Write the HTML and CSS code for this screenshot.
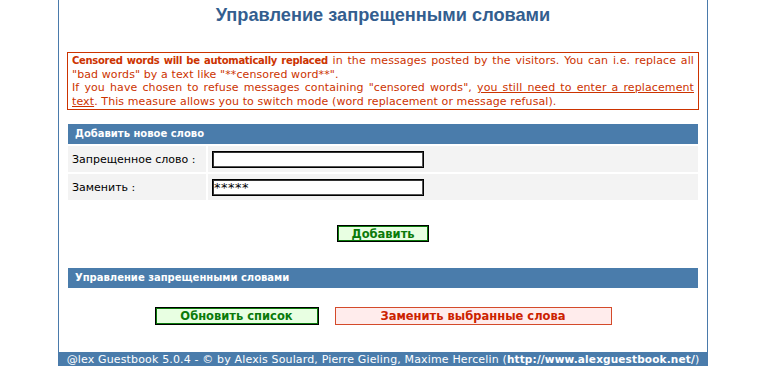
FILE: index.html
```html
<!DOCTYPE html>
<html lang="ru">
<head>
<meta charset="utf-8">
<title>Управление запрещенными словами</title>
<link rel="stylesheet" href="styles.css">
</head>
<body>
<div class="page">
  <h1 class="title">Управление запрещенными словами</h1>

  <div class="notice">
    <div class="line just"><b>Censored words will be automatically replaced</b> in the messages posted by the visitors. You can i.e. replace all</div>
    <div class="line">"bad words" by a text like "**censored word**".</div>
    <div class="line just">If you have chosen to refuse messages containing "censored words", <u>you still need to enter a replacement</u></div>
    <div class="line"><u>text</u>. This measure allows you to switch mode (word replacement or message refusal).</div>
  </div>

  <div class="bar">Добавить новое слово</div>
  <div class="form">
    <div class="cell label">Запрещенное слово :</div>
    <div class="cell field"><input class="text" type="text" value=""></div>
    <div class="cell label">Заменить :</div>
    <div class="cell field"><input class="text" type="text" value="*****"></div>
  </div>

  <div class="actions add-row">
    <button class="btn green add">Добавить</button>
  </div>

  <div class="bar bar2">Управление запрещенными словами</div>

  <div class="actions list-row">
    <button class="btn green refresh">Обновить список</button>
    <button class="btn red replace">Заменить выбранные слова</button>
  </div>

  <div class="footer">@lex Guestbook 5.0.4 - © by Alexis Soulard, Pierre Gieling, Maxime Hercelin (<b>http://www.alexguestbook.net/</b>)</div>
</div>
</body>
</html>
```

FILE: styles.css
```css
html, body {
  margin: 0;
  padding: 0;
  background: #ffffff;
}

body {
  font-family: "DejaVu Sans", Verdana, sans-serif;
  font-size: 11px;
  color: #000;
}

.page {
  width: 630px;
  margin-left: 58px;
  padding: 0 9px;
  border-left: 1px solid #4a7aab;
  border-right: 1px solid #4a7aab;
}

.title {
  margin: 0;
  padding-top: 4px;
  height: 48px;
  font-family: "Liberation Sans", Arial, sans-serif;
  font-size: 18.2px;
  line-height: 22px;
  font-weight: bold;
  color: #335e8f;
  text-align: center;
}

.notice {
  margin: 0 -1px;
  border: 1px solid #cc3300;
  padding: 1px 4px 1px 4px;
  color: #cc3300;
  font-size: 11px;
  letter-spacing: 0.1px;
  line-height: 13.5px;
  height: 54px;
}

.notice b {
  font-size: 10px;
  letter-spacing: -0.3px;
}

.notice .line {
  white-space: nowrap;
  overflow: hidden;
}

.notice .line.just {
  white-space: normal;
  text-align: justify;
  text-align-last: justify;
}

.bar {
  margin-top: 14px;
  height: 20px;
  line-height: 20px;
  background: #4a7cab;
  color: #fff;
  font-size: 10px;
  font-weight: bold;
  padding-left: 7px;
}

.form {
  display: grid;
  grid-template-columns: 138px 1fr;
  column-gap: 2px;
  row-gap: 2px;
  margin-top: 2px;
}

.cell {
  background: #f3f3f3;
  height: 26px;
  display: flex;
  align-items: center;
}

.label {
  padding-left: 4px;
}

.field {
  padding-left: 4px;
}

.text {
  box-sizing: border-box;
  width: 212px;
  height: 17px;
  margin: 0;
  padding: 0 1px;
  border: 1px solid #000;
  box-shadow: inset 1px 1px 0 #333, inset -1px -1px 0 #555;
  background: #fff;
  font-family: "DejaVu Sans", Verdana, sans-serif;
  font-size: 13px;
  letter-spacing: 0.5px;
  line-height: 15px;
  color: #000;
}

.actions {
  display: flex;
  justify-content: center;
}

.add-row {
  margin-top: 25px;
}

.btn {
  box-sizing: border-box;
  margin: 0;
  padding: 0;
  font-family: "DejaVu Sans", Verdana, sans-serif;
  font-size: 11.5px;
  font-weight: bold;
  cursor: pointer;
}

.green {
  border: 1px solid #000;
  box-shadow: inset 0 0 0 1px #0a7a0a;
  background: #e8ffe2;
  color: #0a7a0a;
}

.red {
  border: 1px solid #d44a2a;
  background: #ffecec;
  color: #cc2200;
}

.add {
  width: 92px;
  height: 17px;
}

.bar2 {
  margin-top: 26px;
}

.list-row {
  margin-top: 19px;
  gap: 16px;
}

.refresh {
  width: 164px;
  height: 18px;
}

.replace {
  width: 277px;
  height: 18px;
}

.footer {
  margin: 27px -9px 0 -9px;
  height: 14px;
  line-height: 14px;
  background: #4a7cab;
  color: #fff;
  font-size: 11px;
  letter-spacing: 0.15px;
  text-align: center;
  white-space: nowrap;
}

.footer b {
  font-size: 10.5px;
}
```
